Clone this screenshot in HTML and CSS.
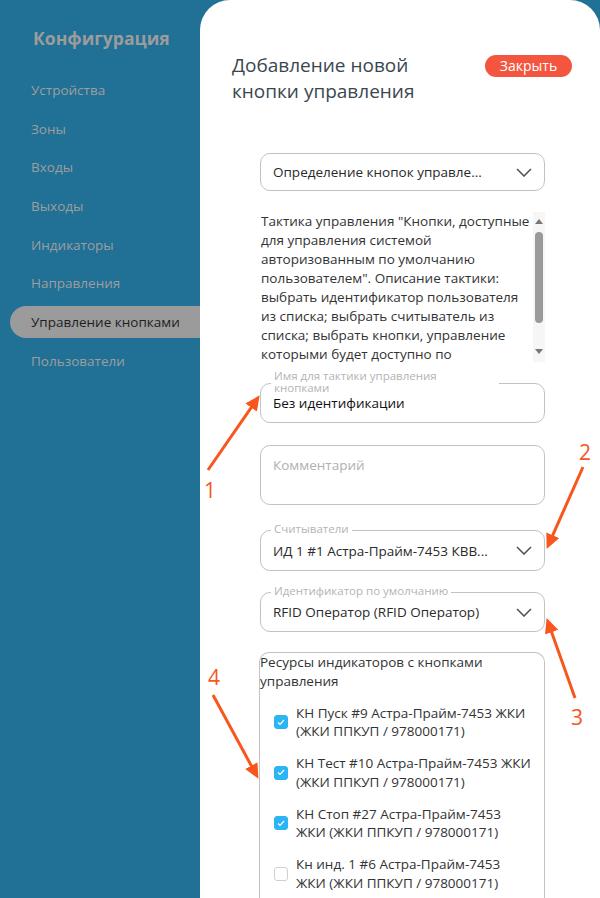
FILE: index.html
```html
<!DOCTYPE html>
<html lang="ru">
<head>
    <meta charset="UTF-8">
    <meta name="viewport" content="width=device-width, initial-scale=1.0">
    <title>Конфигурация</title>
    <link rel="stylesheet" href="styles.css">
</head>
<body>
    <div class="layout">
        <aside class="sidebar">
            <h1>Конфигурация</h1>
            <nav class="side-nav">
                <a href="#">Устройства</a>
                <a href="#">Зоны</a>
                <a href="#">Входы</a>
                <a href="#">Выходы</a>
                <a href="#">Индикаторы</a>
                <a href="#">Направления</a>
                <a href="#" class="active">Управление кнопками</a>
                <a href="#">Пользователи</a>
            </nav>
        </aside>

        <main class="panel">
            <div class="panel-header">
                <h2>Добавление новой кнопки управления</h2>
                <button class="close-btn">Закрыть</button>
            </div>

            <form class="form">
                <div class="field select first">
                    <span class="value">Определение кнопок управле...</span>
                    <svg class="chevron" width="16" height="9" viewBox="0 0 16 9"><polyline points="1,1 8,8 15,1"/></svg>
                </div>

                <div class="description">
                    <div class="description-text">
                        Тактика управления "Кнопки, доступные для управления системой авторизованным по умолчанию пользователем". Описание тактики: выбрать идентификатор пользователя из списка; выбрать считыватель из списка; выбрать кнопки, управление которыми будет доступно по
                    </div>
                    <div class="scrollbar">
                        <span class="arrow-up"></span>
                        <span class="thumb"></span>
                        <span class="arrow-down"></span>
                    </div>
                </div>

                <div class="field input name">
                    <span class="field-label wide">Имя для тактики управления кнопками</span>
                    <span class="value dark">Без идентификации</span>
                </div>

                <div class="field comment">
                    <span class="placeholder">Комментарий</span>
                </div>

                <div class="field select readers">
                    <span class="field-label">Считыватели</span>
                    <span class="value">ИД 1 #1 Астра-Прайм-7453 КВВ...</span>
                    <svg class="chevron" width="16" height="9" viewBox="0 0 16 9"><polyline points="1,1 8,8 15,1"/></svg>
                </div>

                <div class="field select ident">
                    <span class="field-label">Идентификатор по умолчанию</span>
                    <span class="value">RFID Оператор (RFID Оператор)</span>
                    <svg class="chevron" width="16" height="9" viewBox="0 0 16 9"><polyline points="1,1 8,8 15,1"/></svg>
                </div>

                <div class="resources">
                    <div class="resources-title">Ресурсы индикаторов с кнопками управления</div>
                    <div class="check-list">
                        <label class="check-item">
                            <span class="check checked"><svg width="8" height="7" viewBox="0 0 8 7"><polyline points="1,3.5 3,5.5 7,1"/></svg></span>
                            <span>КН Пуск #9 Астра-Прайм-7453 ЖКИ (ЖКИ ППКУП / 978000171)</span>
                        </label>
                        <label class="check-item">
                            <span class="check checked"><svg width="8" height="7" viewBox="0 0 8 7"><polyline points="1,3.5 3,5.5 7,1"/></svg></span>
                            <span>КН Тест #10 Астра-Прайм-7453 ЖКИ (ЖКИ ППКУП / 978000171)</span>
                        </label>
                        <label class="check-item">
                            <span class="check checked"><svg width="8" height="7" viewBox="0 0 8 7"><polyline points="1,3.5 3,5.5 7,1"/></svg></span>
                            <span>КН Стоп #27 Астра-Прайм-7453 ЖКИ (ЖКИ ППКУП / 978000171)</span>
                        </label>
                        <label class="check-item">
                            <span class="check"></span>
                            <span>Кн инд. 1 #6 Астра-Прайм-7453 ЖКИ (ЖКИ ППКУП / 978000171)</span>
                        </label>
                    </div>
                </div>
            </form>
        </main>
    </div>

    <!-- annotation arrows drawn over the screenshot -->
    <svg class="annotations" width="600" height="898" viewBox="0 0 600 898">
        <defs>
            <marker id="head" markerUnits="userSpaceOnUse" markerWidth="16" markerHeight="14" refX="4" refY="7" orient="auto">
                <path d="M0,0 L15,7 L0,14 z" fill="#f8561c"/>
            </marker>
        </defs>
        <line x1="208" y1="470" x2="253.4" y2="404.3" marker-end="url(#head)"/>
        <line x1="583" y1="467" x2="551.1" y2="538.9" marker-end="url(#head)"/>
        <line x1="575" y1="698" x2="550.3" y2="628.4" marker-end="url(#head)"/>
        <line x1="213" y1="695" x2="253.2" y2="769.2" marker-end="url(#head)"/>
        <text x="210" y="498">1</text>
        <text x="585" y="460">2</text>
        <text x="577" y="725">3</text>
        <text x="214" y="685">4</text>
    </svg>
</body>
</html>
```

FILE: styles.css
```css
body {
    margin: 0;
    padding: 0;
    width: 600px;
    height: 898px;
    overflow: hidden;
    position: relative;
    font-family: "Open Sans", "DejaVu Sans", sans-serif;
    background-color: #217096;
}
.layout {
    display: flex;
    height: 898px;
}
.sidebar {
    width: 200px;
    flex-shrink: 0;
}
.sidebar h1 {
    margin: 26px 0 0 33px;
    font-size: 17.6px;
    line-height: 24px;
    font-weight: 700;
    color: #9c9c9c;
}
.side-nav {
    display: flex;
    flex-direction: column;
    gap: 6.7px;
    margin-top: 24px;
    padding-left: 10px;
}
.side-nav a {
    display: block;
    height: 32px;
    line-height: 32px;
    padding-left: 21px;
    font-size: 13.5px;
    color: #9e9e9e;
    text-decoration: none;
    border-radius: 16px 0 0 16px;
}
.side-nav a.active {
    background-color: #9b9b9b;
    color: #1e1e1e;
}
.panel {
    flex: 1;
    background: white;
    border-radius: 30px 30px 0 0;
    padding: 52px 28px 0 32px;
}
.panel-header {
    display: flex;
    justify-content: space-between;
    align-items: flex-start;
}
.panel-header h2 {
    margin: 0;
    width: 200px;
    font-size: 19px;
    line-height: 26px;
    font-weight: 500;
    color: #3b4650;
}
.close-btn {
    margin-top: 3px;
    height: 22px;
    width: 87px;
    padding: 0;
    border: none;
    border-radius: 11px;
    background-color: #f4553f;
    color: white;
    font-family: inherit;
    font-size: 14px;
    line-height: 22px;
}
.form {
    width: 285px;
    margin-left: 28px;
    display: flex;
    flex-direction: column;
}
.field {
    position: relative;
    box-sizing: border-box;
    border: 1px solid #c2c2c2;
    border-radius: 10px;
    padding: 0 12px;
    display: flex;
    align-items: center;
    font-size: 13.5px;
}
.field.first {
    margin-top: 49px;
    height: 38px;
}
.field.name {
    margin-top: 21px;
    height: 40px;
}
.field.comment {
    margin-top: 22px;
    height: 60px;
    align-items: flex-start;
    padding-top: 10px;
}
.field.readers {
    margin-top: 25px;
    height: 41px;
}
.field.ident {
    margin-top: 21px;
    height: 40px;
}
.field .value {
    flex: 1;
    color: #2a2a2a;
    white-space: nowrap;
}
.field .value.dark {
    color: #111;
}
.placeholder {
    color: #b0b0b0;
}
.chevron {
    fill: none;
    stroke: #555;
    stroke-width: 1.6;
}
.field-label {
    position: absolute;
    left: 10px;
    top: -2px;
    transform: translateY(-50%);
    padding: 0 3px;
    background: white;
    font-size: 11.5px;
    line-height: 12px;
    color: #b4b4b4;
}
.field-label.wide {
    width: 175px;
    padding-right: 50px;
}
.description {
    margin-top: 21px;
    margin-left: -2px;
    height: 150px;
    display: flex;
}
.description-text {
    flex: 1;
    padding-left: 3px;
    padding-right: 2px;
    overflow: hidden;
    font-size: 13.5px;
    line-height: 19px;
    color: #333;
}
.scrollbar {
    width: 12px;
    background-color: #f6f6f6;
    display: flex;
    flex-direction: column;
    align-items: center;
}
.arrow-up,
.arrow-down {
    width: 0;
    height: 0;
    border-left: 4px solid transparent;
    border-right: 4px solid transparent;
}
.arrow-up {
    margin-top: 7px;
    border-bottom: 5px solid #777;
}
.arrow-down {
    margin-top: 26px;
    border-top: 5px solid #777;
}
.thumb {
    margin-top: 8px;
    width: 8px;
    height: 91px;
    border-radius: 4px;
    background-color: #9a9a9a;
}
.resources {
    margin-top: 20px;
    margin-left: -1px;
    height: 245px;
    overflow: hidden;
    border: 1px solid #c2c2c2;
    border-bottom: none;
    border-radius: 10px 10px 0 0;
}
.resources-title {
    font-size: 13.5px;
    line-height: 19px;
    color: #333;
}
.check-list {
    margin-top: 12.5px;
    display: flex;
    flex-direction: column;
    gap: 13.5px;
    padding: 0 12px 0 14px;
}
.check-item {
    display: flex;
    align-items: center;
    gap: 8px;
    font-size: 13.5px;
    line-height: 18.5px;
    color: #333;
}
.check {
    flex-shrink: 0;
    box-sizing: border-box;
    width: 14px;
    height: 14px;
    border: 1px solid #cfcfcf;
    border-radius: 3px;
    background: white;
    display: flex;
    align-items: center;
    justify-content: center;
}
.check.checked {
    border-color: #2bb5f5;
    background-color: #2bb5f5;
}
.check svg {
    fill: none;
    stroke: white;
    stroke-width: 1.2;
}
.annotations {
    position: absolute;
    top: 0;
    left: 0;
    pointer-events: none;
}
.annotations line {
    stroke: #f8561c;
    stroke-width: 3;
}
.annotations text {
    fill: #f8561c;
    font-family: "Open Sans", sans-serif;
    font-size: 21px;
    text-anchor: middle;
}
```
